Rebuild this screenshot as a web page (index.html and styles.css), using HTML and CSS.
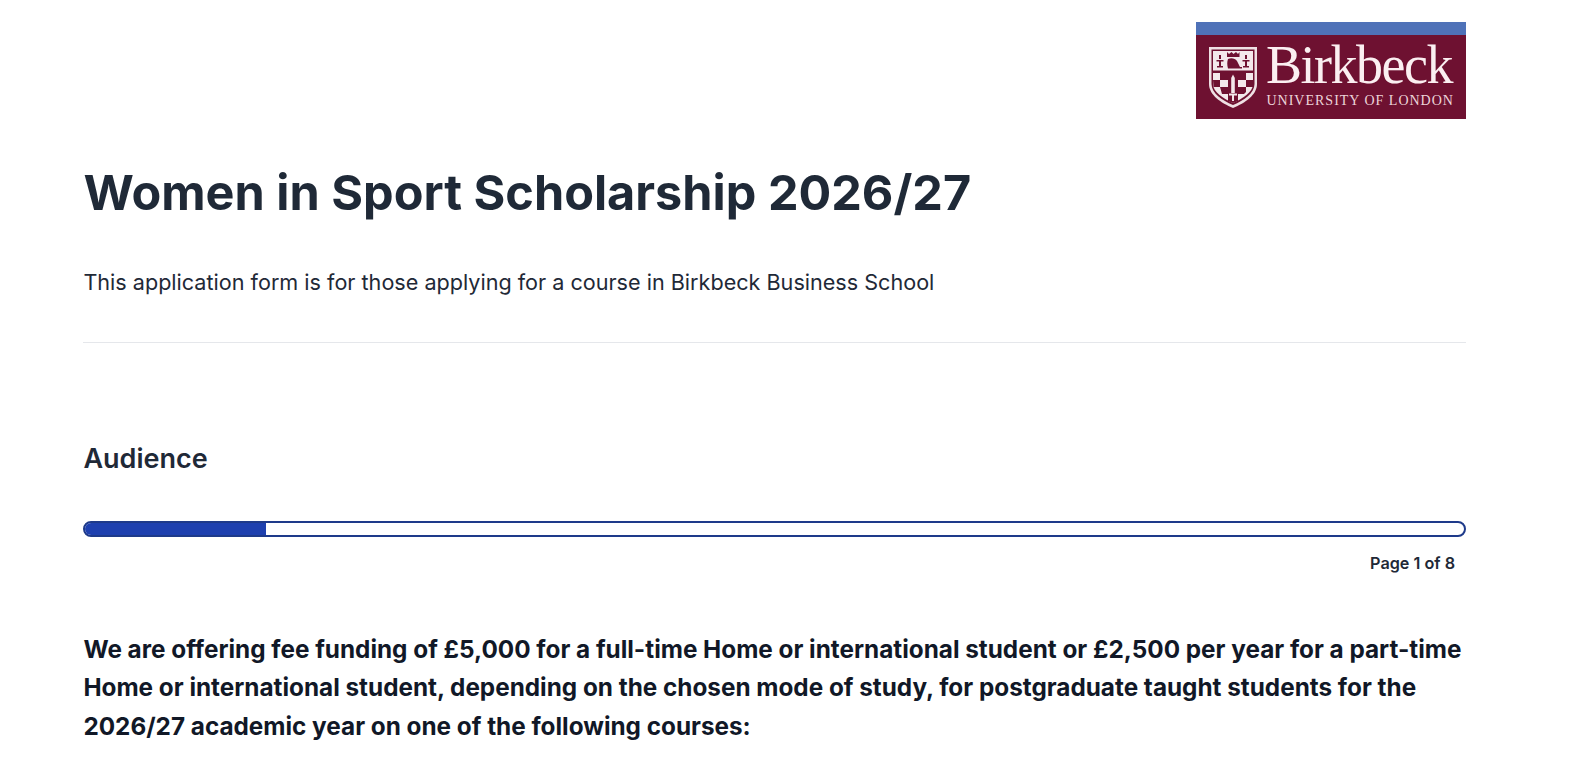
FILE: index.html
```html
<!DOCTYPE html>
<html lang="en">
<head>
<meta charset="utf-8">
<title>Women in Sport Scholarship 2026/27</title>
<link rel="stylesheet" href="styles.css">
</head>
<body>
<main class="page">
  <header class="brand-row">
    <div class="logo">
      <div class="logo-band"></div>
      <div class="logo-body">
        <svg class="crest" width="50" height="63" viewBox="0 0 50 63" aria-hidden="true">
          <path d="M1 1H49V38C49 49 37 57 25 62C13 57 1 49 1 38Z" fill="#efe0e4"/>
          <path d="M3.500 3.500H46.500V38C46.500 47 36 54.500 25 59C14 54.500 3.500 47 3.500 38Z" fill="#6e1131"/>
          <path d="M5 5H45V24.500H5Z" fill="#f3e8eb"/>
          <path d="M5 27H45V38C45 46 35 52.500 25 57C15 52.500 5 46 5 38Z" fill="#f3e8eb"/>
          <path d="M12 27H20V34H12ZM30 27H38V34H30ZM5 34H12V41H5.500ZM38 34H45V41H38ZM12 41H20V48H14ZM30 41H38V46L36 48H30ZM20 27H30V55L25 57L20 55Z" fill="#6e1131"/>
          <path d="M25 28.500L26.800 32V47H23.200V32Z" fill="#f3e8eb"/>
          <path d="M21 47.500H29V49.500H26V55H24V49.500H21Z" fill="#f3e8eb"/>
          <path d="M19 6L21 8L23.500 6L25.500 8L28 6L30 8L31.500 6V11H19Z" fill="#6e1131"/>
          <path d="M20 13C23 11.500 27 12 29 15L32 21H34V22.500H20C19 19 19 16 20 13Z" fill="#6e1131"/>
          <path d="M8.500 14H15.500V15.500H13V20H15V21.500H9V20H11V15.500H8.500ZM11 9H13V13H11ZM34.500 14H41.500V15.500H39V20H41V21.500H35V20H37V15.500H34.500ZM37 9H39V13H37Z" fill="#6e1131"/>
        </svg>
        <div class="wordmark">
          <div class="wordmark-name">Birkbeck</div>
          <div class="wordmark-sub">UNIVERSITY OF LONDON</div>
        </div>
      </div>
    </div>
  </header>

  <h1 class="title">Women in Sport Scholarship 2026/27</h1>
  <p class="subtitle">This application form is for those applying for a course in Birkbeck Business School</p>
  <hr class="rule">

  <h2 class="section">Audience</h2>
  <div class="progress"><div class="progress-fill"></div></div>
  <div class="page-count">Page 1 of 8</div>

  <p class="lead">We are offering fee funding of £5,000 for a full-time Home or international student or £2,500 per year for a part-time Home or international student, depending on the chosen mode of study, for postgraduate taught students for the 2026/27 academic year on one of the following courses:</p>
</main>
</body>
</html>
```
FILE: styles.css
```css
* { box-sizing: border-box; }
html, body { margin: 0; height: 100%; overflow: hidden; background: #fff; }
body { font-family: Inter, "Liberation Sans", sans-serif; color: #1f2937; }
.page { padding: 22px 113px 0 83.4px; }
.brand-row { display: flex; justify-content: flex-end; }
.logo { width: 270px; height: 97px; background: #6e1131; display: flex; flex-direction: column; }
.logo-band { height: 13px; background: #4f72b8; }
.logo-body { flex: 1; display: flex; align-items: center; padding: 0 13px 0 12px; gap: 8px; color: #fbeff1; }
.crest { flex: none; }
.wordmark { flex: 1; }
.wordmark-name { font-family: "Liberation Serif", serif; font-size: 54px; line-height: 40px; letter-spacing: -1.5px; text-align: right; white-space: nowrap; padding-right: 2px; }
.wordmark-sub { font-family: "Liberation Serif", serif; font-size: 14px; line-height: 16px; letter-spacing: 1px; text-align: right; margin-top: 8px; white-space: nowrap; color: #ecd4da; }
.title { margin: 40px 0 0; font-size: 48.6px; line-height: 68px; font-weight: 700; color: #1f2937; }
.subtitle { margin: 40px 0 0; font-size: 21.6px; line-height: 30px; color: #1f2937; }
.rule { margin: 45px 0 0; border: 0; border-top: 1px solid #e5e7eb; }
.section { margin: 84px 0 0; font-size: 27px; line-height: 64px; font-weight: 600; color: #1f2937; }
.progress { height: 16px; margin-top: 30px; border: 2px solid #1e3a8a; border-radius: 8px; background: #fff; overflow: hidden; }
.progress-fill { width: 13.1%; height: 100%; background: #1e40af; }
.page-count { margin-top: 15px; padding-right: 11px; text-align: right; font-size: 16.2px; line-height: 22px; font-weight: 600; }
.lead { margin: 56px 0 0; font-size: 24.3px; line-height: 38.3px; font-weight: 700; color: #111827; }
```
